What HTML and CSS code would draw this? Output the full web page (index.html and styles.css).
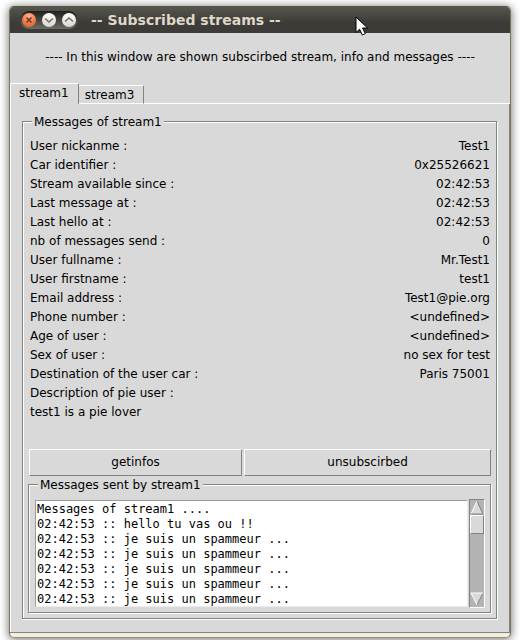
FILE: index.html
```html
<!DOCTYPE html>
<html lang="en">
<head>
<meta charset="utf-8">
<title>-- Subscribed streams --</title>
<link rel="stylesheet" href="styles.css">
</head>
<body>
<div class="window">
  <header class="titlebar">
    <div class="controls">
      <button type="button" class="ctl ctl-close" aria-label="Close"><svg viewBox="0 0 14 14"><path d="M4.5 4.5l5 5M9.5 4.5l-5 5"/></svg></button>
      <button type="button" class="ctl" aria-label="Minimize"><svg viewBox="0 0 14 14"><path d="M3 5.500l4 3.500 4-3.500"/></svg></button>
      <button type="button" class="ctl" aria-label="Maximize"><svg viewBox="0 0 14 14"><path d="M3 8.500l4-3.500 4 3.500"/></svg></button>
    </div>
    <h1 class="title">-- Subscribed streams --</h1>
    <svg class="cursor" viewBox="0 0 14 21"><path d="M1 1v15.500l3.600-3.300 2.700 5.800 3-1.300-2.700-5.700h4.900z"/></svg>
  </header>
  <main class="content">
    <p class="intro">---- In this window are shown subscirbed stream, info and messages ----</p>
    <div class="tabs" role="tablist">
      <button type="button" class="tab tab-active" role="tab" aria-selected="true">stream1</button>
      <button type="button" class="tab" role="tab" aria-selected="false">stream3</button>
      <span class="tab-rest"></span>
    </div>
    <section class="pane">
      <fieldset class="group">
        <legend>Messages of stream1</legend>
        <table class="info">
          <tr><th>User nickanme :</th><td>Test1</td></tr>
          <tr><th>Car identifier :</th><td>0x25526621</td></tr>
          <tr><th>Stream available since :</th><td>02:42:53</td></tr>
          <tr><th>Last message at :</th><td>02:42:53</td></tr>
          <tr><th>Last hello at :</th><td>02:42:53</td></tr>
          <tr><th>nb of messages send :</th><td>0</td></tr>
          <tr><th>User fullname :</th><td>Mr.Test1</td></tr>
          <tr><th>User firstname :</th><td>test1</td></tr>
          <tr><th>Email address :</th><td>Test1@pie.org</td></tr>
          <tr><th>Phone number :</th><td>&lt;undefined&gt;</td></tr>
          <tr><th>Age of user :</th><td>&lt;undefined&gt;</td></tr>
          <tr><th>Sex of user :</th><td>no sex for test</td></tr>
          <tr><th>Destination of the user car :</th><td>Paris 75001</td></tr>
          <tr><th colspan="2">Description of pie user :</th></tr>
          <tr><td colspan="2" class="description">test1 is a pie lover</td></tr>
        </table>
        <div class="actions">
          <button type="button" class="action">getinfos</button>
          <button type="button" class="action action-wide">unsubscirbed</button>
        </div>
        <fieldset class="group group-log">
          <legend><label for="log">Messages sent by stream1</label></legend>
          <div class="log-row">
            <textarea id="log" class="log" rows="7" readonly>Messages of stream1 ....
02:42:53 :: hello tu vas ou !!
02:42:53 :: je suis un spammeur ...
02:42:53 :: je suis un spammeur ...
02:42:53 :: je suis un spammeur ...
02:42:53 :: je suis un spammeur ...
02:42:53 :: je suis un spammeur ...</textarea>
            <div class="scrollbar">
              <button type="button" class="arrow" aria-label="Scroll up"><svg viewBox="0 0 14 15"><path class="face" d="M7 1L1 14h12z"/><path class="light" d="M7 1L1 14"/><path class="dark" d="M7 1l6 13H1"/></svg></button>
              <div class="thumb"></div>
              <div class="trough"></div>
              <button type="button" class="arrow" aria-label="Scroll down"><svg viewBox="0 0 14 15"><path class="face" d="M1 1h12L7 13z"/><path class="dark" d="M13 1L7 13"/><path class="light" d="M13 1H1l6 12"/></svg></button>
            </div>
          </div>
        </fieldset>
      </fieldset>
    </section>
  </main>
</div>
</body>
</html>
```
FILE: styles.css
```css
:root {
  --face: #d9d9d9;
  --dark: #828282;
  --light: #fff;
  --brown: #81745d;
}

* { box-sizing: border-box; }

body {
  margin: 0;
  padding: 6px 9px 2px;
  background: #fff;
  color: #000;
  font: 12px/15px "DejaVu Sans", sans-serif;
}

button {
  margin: 0;
  padding: 0;
  color: inherit;
  font: inherit;
}

.window {
  border: 1px solid var(--brown);
  border-top-color: #55534b;
  border-bottom-color: #a2906c;
  border-radius: 5px;
  background: #f2ede0;
  padding-bottom: 4px;
  box-shadow: 0 1px 8px 1px rgba(0, 0, 0, 0.5);
}

.titlebar {
  position: relative;
  display: flex;
  align-items: center;
  gap: 13px;
  height: 26px;
  padding-left: 10px;
  border-radius: 4px 4px 0 0;
  background: linear-gradient(#56564d, #3c3b37 60%);
}

.controls {
  display: flex;
  align-items: center;
  gap: 6px;
  height: 18px;
  padding: 0 2px;
  border-radius: 9px;
  background: linear-gradient(#20201d, #6b6c66);
}

.ctl {
  width: 14px;
  height: 14px;
  border: 0;
  border-radius: 50%;
  background: linear-gradient(#fff, #dcd6ca);
}

.ctl-close { background: radial-gradient(circle at 50% 20%, #ffb08a, #ed6b38 70%); }

.ctl svg { display: block; width: 14px; height: 14px; }

.ctl path {
  fill: none;
  stroke: #716e67;
  stroke-width: 1.5;
}

.ctl-close path { stroke: #67362a; }

.title {
  margin: 0;
  color: #dfd8c8;
  font-size: 14px;
  line-height: 18px;
  font-weight: bold;
}

.cursor {
  position: absolute;
  left: 345px;
  top: 9px;
  width: 14px;
  height: 21px;
  fill: #fff;
  stroke: #000;
  stroke-width: 1;
}

.content {
  border-bottom: 1px solid var(--dark);
  background: var(--face);
}

.intro {
  margin: 0;
  padding: 17px 0 18px;
  text-align: center;
}

.tabs {
  display: flex;
  align-items: flex-end;
}

.tab {
  height: 19px;
  padding: 1px 9px 0 6px;
  border: 0 solid var(--light);
  border-width: 1px 1px 1px 0;
  border-right-color: var(--dark);
  border-radius: 0 2px 0 0;
  background: var(--face);
}

.tab-active {
  height: 21px;
  padding: 0 9px 1px 8px;
  border-width: 1px 1px 0 1px;
  border-radius: 2px 2px 0 0;
}

.tab-rest {
  flex: 1;
  border-bottom: 1px solid var(--light);
}

.pane {
  padding: 9px 12px 13px 11px;
  border: 0 solid var(--light);
  border-width: 0 1px 0 1px;
  border-right-color: var(--dark);
}

.group {
  min-width: 0;
  margin: 0;
  padding: 7px 5px 5px;
  border: 1px solid var(--dark);
  box-shadow: 1px 1px 0 var(--light), inset 1px 1px 0 var(--light);
}

.group > legend {
  margin-left: 4px;
  padding: 2px 2px 0;
  background: var(--face);
}

.info {
  width: 100%;
  padding: 0 1px 0 2px;
  border-collapse: separate;
  border-spacing: 0;
}

.info th,
.info td {
  padding: 2px 0;
  text-align: left;
  font-weight: normal;
}

.info td { text-align: right; }

.info .description { text-align: left; }

.actions {
  display: flex;
  gap: 2px;
  margin-top: 27px;
  padding-left: 1px;
}

.action {
  flex: 213;
  height: 27px;
  border: 1px solid var(--dark);
  border-top-color: var(--light);
  border-left-color: var(--light);
  background: var(--face);
}

.action-wide { flex: 247; }

.group-log { padding: 6px 5px 4px; }

.log-row {
  display: flex;
  align-items: center;
  margin-left: 1px;
}

.log {
  flex: 1;
  min-width: 0;
  height: 107px;
  padding: 1px;
  border: 1px solid #9a9a9a;
  border-right-color: #ececec;
  border-bottom-color: #ececec;
  background: #fff;
  color: #000;
  font: 12px/15px "DejaVu Sans Mono", monospace;
  overflow: hidden;
  resize: none;
}

.scrollbar {
  display: flex;
  flex-direction: column;
  width: 16px;
  height: 109px;
  margin-left: 1px;
  border: 1px solid var(--dark);
  border-right-color: var(--light);
  border-bottom-color: var(--light);
  background: #b3b3b3;
}

.arrow {
  height: 15px;
  border: 0;
  background: none;
}

.arrow svg { display: block; width: 14px; height: 15px; }
.arrow path { fill: none; stroke-width: 1; }
.arrow .face { fill: var(--face); }
.arrow .light { stroke: var(--light); }
.arrow .dark { stroke: var(--dark); }

.thumb {
  height: 19px;
  border: 1px solid var(--dark);
  border-top-color: var(--light);
  border-left-color: var(--light);
  background: var(--face);
}

.trough { flex: 1; }
```
